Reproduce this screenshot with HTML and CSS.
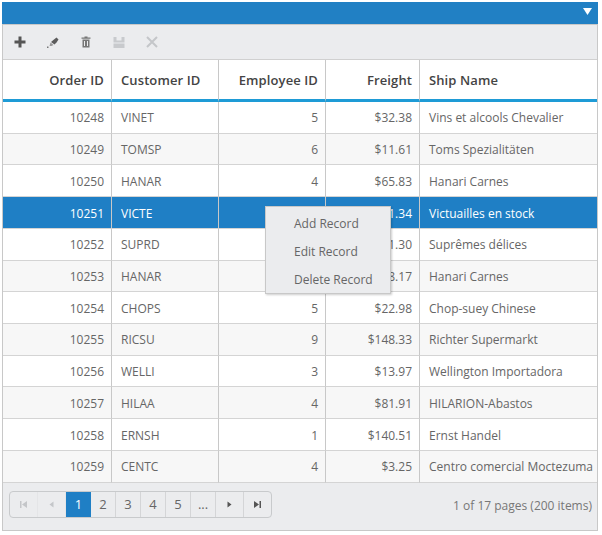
FILE: index.html

```html
<!DOCTYPE html>
<html lang="en">
<head>
  <meta charset="UTF-8" />
  <title>Grid</title>
  <link rel="stylesheet" href="styles.css">
</head>
<body>
  <div class="grid">
    <div class="titlebar">
      <svg class="caret" width="9" height="7" viewBox="0 0 9 7"><path d="M0 0H9L4.500 7Z" fill="#fff"/></svg>
    </div>
    <div class="toolbar">
      <svg class="tool" width="16" height="16" viewBox="0 0 16 16"><path d="M6.500 2.500H9.500V6.500H13.500V9.500H9.500V13.500H6.500V9.500H2.500V6.500H6.500Z" fill="#555"/></svg>
      <svg class="tool" width="16" height="16" viewBox="0 0 16 16"><path d="M9 5.500L11.500 3.500L13.500 5.500L11.500 8.500L9.500 10.500L6 8Z" fill="#5c5c5c"/><path d="M5.500 8.500L8.500 11L6.500 12H4.500Z" fill="#999"/><rect x="2" y="12.500" width="1.500" height="1.500" fill="#777"/></svg>
      <svg class="tool" width="16" height="16" viewBox="0 0 16 16"><path d="M6.500 2.500H9.500V3.500H12.500V4.800H3.500V3.500H6.500Z" fill="#777"/><path d="M4.500 5.500H11.500V13.500H4.500ZM6 7V12H7V7ZM9 7V12H10V7Z" fill="#777" fill-rule="evenodd"/></svg>
      <svg class="tool" width="16" height="16" viewBox="0 0 16 16"><path d="M2.500 3H13.500V14H2.500ZM5.500 3V6.500H10.500V3ZM2.500 8.500V9.500H13.500V8.500Z" fill="#c8cacd" fill-rule="evenodd"/></svg>
      <svg class="tool" width="16" height="16" viewBox="0 0 16 16"><path d="M3 3L13 13M13 3L3 13" stroke="#c4c6c9" stroke-width="2" fill="none"/></svg>
    </div>
    <table class="records">
      <colgroup>
        <col class="col-order"><col class="col-customer"><col class="col-employee"><col class="col-freight"><col>
      </colgroup>
      <thead>
        <tr>
          <th class="num">Order ID</th><th>Customer ID</th><th class="num">Employee ID</th><th class="num">Freight</th><th>Ship Name</th>
        </tr>
      </thead>
      <tbody>
        <tr><td class="num">10248</td><td>VINET</td><td class="num">5</td><td class="num">$32.38</td><td>Vins et alcools Chevalier</td></tr>
        <tr class="alt"><td class="num">10249</td><td>TOMSP</td><td class="num">6</td><td class="num">$11.61</td><td>Toms Spezialitäten</td></tr>
        <tr><td class="num">10250</td><td>HANAR</td><td class="num">4</td><td class="num">$65.83</td><td>Hanari Carnes</td></tr>
        <tr class="selected"><td class="num">10251</td><td>VICTE</td><td class="num">3</td><td class="num">$41.34</td><td>Victuailles en stock</td></tr>
        <tr><td class="num">10252</td><td>SUPRD</td><td class="num">4</td><td class="num">$51.30</td><td>Suprêmes délices</td></tr>
        <tr class="alt"><td class="num">10253</td><td>HANAR</td><td class="num">3</td><td class="num">$58.17</td><td>Hanari Carnes</td></tr>
        <tr><td class="num">10254</td><td>CHOPS</td><td class="num">5</td><td class="num">$22.98</td><td>Chop-suey Chinese</td></tr>
        <tr class="alt"><td class="num">10255</td><td>RICSU</td><td class="num">9</td><td class="num">$148.33</td><td>Richter Supermarkt</td></tr>
        <tr><td class="num">10256</td><td>WELLI</td><td class="num">3</td><td class="num">$13.97</td><td>Wellington Importadora</td></tr>
        <tr class="alt"><td class="num">10257</td><td>HILAA</td><td class="num">4</td><td class="num">$81.91</td><td>HILARION-Abastos</td></tr>
        <tr><td class="num">10258</td><td>ERNSH</td><td class="num">1</td><td class="num">$140.51</td><td>Ernst Handel</td></tr>
        <tr class="alt"><td class="num">10259</td><td>CENTC</td><td class="num">4</td><td class="num">$3.25</td><td>Centro comercial Moctezuma</td></tr>
      </tbody>
    </table>
    <div class="footer">
      <div class="pager">
        <span class="page icon off"><svg width="9" height="9" viewBox="0 0 9 9"><path d="M1 1H2.500V8H1ZM8 1V8L3 4.500Z" fill="#c4c6c9"/></svg></span>
        <span class="page icon off"><svg width="9" height="9" viewBox="0 0 9 9"><path d="M6.500 1.500V7.500L2.500 4.500Z" fill="#c4c6c9"/></svg></span>
        <span class="page current">1</span>
        <span class="page">2</span>
        <span class="page">3</span>
        <span class="page">4</span>
        <span class="page">5</span>
        <span class="page">...</span>
        <span class="page icon"><svg width="9" height="9" viewBox="0 0 9 9"><path d="M2.500 1.500V7.500L6.500 4.500Z" fill="#555"/></svg></span>
        <span class="page icon"><svg width="9" height="9" viewBox="0 0 9 9"><path d="M1 1V8L6 4.500ZM6.500 1H8V8H6.500Z" fill="#555"/></svg></span>
      </div>
      <div class="pageinfo">1 of 17 pages (200 items)</div>
    </div>
    <ul class="menu">
      <li>Add Record</li>
      <li>Edit Record</li>
      <li>Delete Record</li>
    </ul>
  </div>
</body>
</html>
```

FILE: styles.css

```css
html, body {
  margin: 0;
  padding: 0;
  background: #fff;
}
body {
  font-family: "Open Sans", "Noto Sans", sans-serif;
  font-size: 12px;
  color: #666;
}
.grid {
  position: relative;
  width: 594px;
  margin: 2px 0 0 2px;
  border-right: 1px solid #c8c8c8;
  border-left: 1px solid #c8c8c8;
  border-bottom: 1px solid #c8c8c8;
}
.titlebar {
  display: flex;
  justify-content: flex-end;
  align-items: center;
  height: 22px;
  margin: 0 -1px;
  padding-right: 6px;
  background: #2180c4;
  border-bottom: 1px solid #c8c8c8;
}
.caret {
  margin-bottom: 4px;
}
.toolbar {
  display: flex;
  align-items: center;
  gap: 17px;
  height: 35px;
  padding-left: 9px;
  background: #ebecee;
  border-bottom: 1px solid #d0d0d0;
  box-sizing: border-box;
}
.records {
  width: 100%;
  border-collapse: separate;
  border-spacing: 0;
  table-layout: fixed;
}
.col-order { width: 109px; }
.col-customer { width: 107px; }
.col-employee { width: 107px; }
.col-freight { width: 94px; }
th {
  height: 42px;
  padding: 0 7px 0 9px;
  box-sizing: border-box;
  background: #fff;
  border-bottom: 3px solid #1e9bd6;
  border-right: 1px solid #c8c8c8;
  font-size: 13px;
  font-weight: 600;
  letter-spacing: 0.1px;
  color: #444;
  text-align: left;
}
td {
  height: 31.73px;
  padding: 1px 7px 0 9px;
  box-sizing: border-box;
  border-bottom: 1px solid #d4d4d4;
  border-right: 1px solid #c8c8c8;
  white-space: nowrap;
  overflow: hidden;
}
th:last-child, td:last-child { border-right: none; }
.num { text-align: right; }
.alt td { background: #f7f7f7; }
.selected td {
  background: #1f7fc5;
  color: #fff;
}
.footer {
  display: flex;
  justify-content: space-between;
  align-items: center;
  height: 47px;
  padding: 0 5px 0 6px;
  background: #ebecee;
  box-sizing: border-box;
}
.pager {
  display: flex;
  height: 27px;
  margin-bottom: 4px;
  border: 1px solid #c8cacc;
  border-radius: 4px;
  overflow: hidden;
  box-sizing: border-box;
}
.page {
  display: flex;
  align-items: center;
  justify-content: center;
  width: 25px;
  box-sizing: border-box;
  border-right: 1px solid #d4d5d7;
  font-size: 13px;
  color: #666;
}
.page.icon { width: 28px; }
.page:last-child { width: 27px; border-right: none; }
.page.off { border-right-color: #e4e5e7; }
.page.current {
  background: #1f7fc5;
  color: #fff;
  border-right: none;
}
.pageinfo {
  margin-bottom: 2px;
  color: #777;
}
.menu {
  position: absolute;
  left: 262px;
  top: 204px;
  width: 126px;
  height: 88px;
  margin: 0;
  padding: 3px 0 0;
  box-sizing: border-box;
  list-style: none;
  background: #ebecee;
  border: 1px solid #c8c8c8;
  box-shadow: 1px 1px 2px rgba(0,0,0,0.2);
}
.menu li {
  height: 28px;
  line-height: 27px;
  padding-left: 28px;
  color: #666;
}
```
